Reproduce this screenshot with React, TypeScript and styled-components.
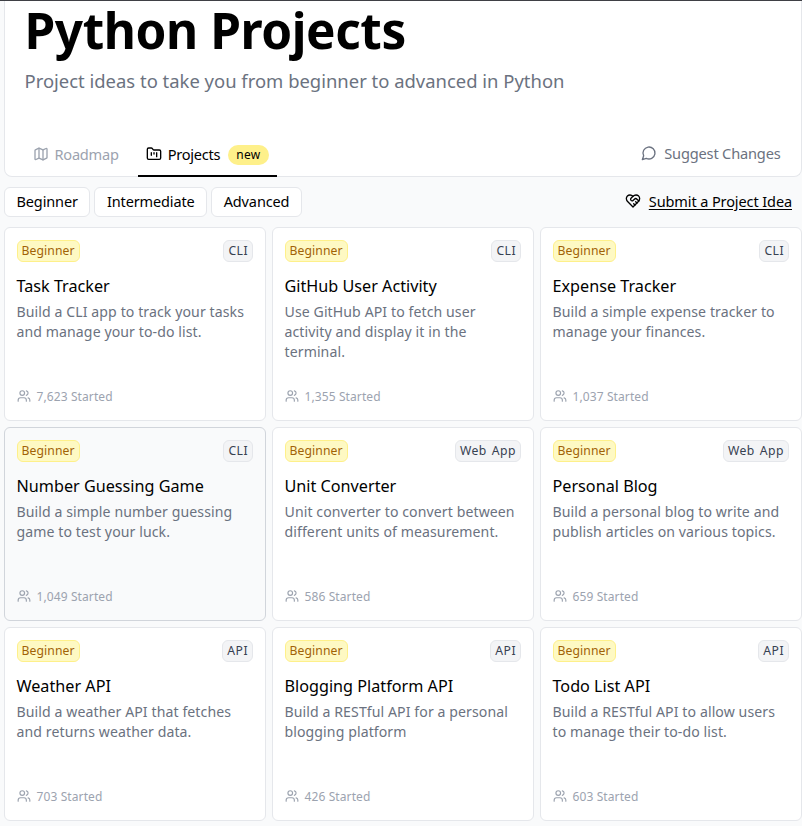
import React from 'react';
import styled, { createGlobalStyle, css } from 'styled-components';
import { FolderKanban, Map, Users } from 'lucide-react';

const GlobalStyle = createGlobalStyle`
  *, *::before, *::after { box-sizing: border-box; }
  body {
    margin: 0;
    background: #f9fafb;
    color: #000;
    font-family: "Noto Sans", "Open Sans", sans-serif;
    overflow: hidden;
  }
  h1, h3, p { margin: 0; }
  svg { flex: none; }
`;

const Page = styled.main`
  height: 826px;
  padding-left: 4px;
  border-top: 1px solid #3f4045;
`;

const Header = styled.header`
  display: flex;
  flex-direction: column;
  height: 176px;
  padding: 0 20.5px 0 19.5px;
  background: #fff;
  border: 1px solid #e5e7eb;
  border-top: 0;
  border-radius: 0 0 8px 8px;
`;

const Title = styled.h1`
  height: 58px;
  font-size: 49.5px;
  font-weight: 700;
  line-height: 58px;
  letter-spacing: -0.42px;
  white-space: nowrap;
`;

const Subtitle = styled.p`
  margin-top: 8px;
  color: #6b7280;
  font-size: 18.45px;
  line-height: 28px;
  white-space: nowrap;
`;

const Tabs = styled.nav`
  display: flex;
  align-items: stretch;
  height: 44px;
  margin-top: auto;
  margin-bottom: -1px;
`;

const Tab = styled.a<{ $active?: boolean }>`
  display: flex;
  align-items: center;
  gap: 6px;
  padding: 0 8px;
  margin-right: 11px;
  border-bottom: 2px solid ${p => (p.$active ? '#000' : 'transparent')};
  color: ${p => (p.$active ? '#000' : '#9ca3af')};
  font-size: 14.6px;
  letter-spacing: -0.25px;
  white-space: nowrap;
`;

const NewBadge = styled.span`
  margin: 2px 0 0 2px;
  padding: 0 8px;
  border-radius: 10px;
  background: #fef08a;
  font-size: 12px;
  letter-spacing: 0.3px;
  line-height: 20px;
`;

const SuggestLink = styled.a`
  display: flex;
  align-items: center;
  gap: 7px;
  margin-left: auto;
  padding-bottom: 4px;
  color: #6b7280;
  font-size: 14.6px;
  letter-spacing: -0.18px;
  white-space: nowrap;
`;

const Filters = styled.div`
  display: flex;
  align-items: center;
  gap: 4px;
  height: 30px;
  margin: 10px 0;
`;

const FilterButton = styled.button`
  height: 30px;
  padding: 0 11.5px 2px;
  background: #fff;
  border: 1px solid #e5e7eb;
  border-radius: 6px;
  color: #000;
  font: 14.5px "Noto Sans", "Open Sans", sans-serif;
  letter-spacing: -0.12px;
  white-space: nowrap;
`;

const SubmitLink = styled.a`
  display: flex;
  align-items: center;
  gap: 8px;
  margin-left: auto;
  margin-right: 10px;
  padding-bottom: 2px;
  font-size: 14.5px;
  letter-spacing: -0.1px;
  white-space: nowrap;
  span { text-decoration: underline; text-underline-offset: 2px; }
`;

const Grid = styled.section`
  display: grid;
  grid-template-columns: repeat(3, 262px);
  grid-auto-rows: 194px;
  gap: 6px;
`;

const Card = styled.article<{ $hovered?: boolean }>`
  display: flex;
  flex-direction: column;
  padding: 12px 12px 12px 11.5px;
  background: ${p => (p.$hovered ? '#f9fafb' : '#fff')};
  border: 1px solid ${p => (p.$hovered ? '#d1d5db' : '#e5e7eb')};
  border-radius: 6px;
`;

const Labels = styled.div`
  display: flex;
  justify-content: space-between;
`;

const Label = styled.span<{ $level?: boolean }>`
  height: 22px;
  padding: 0 4px;
  border: 1px solid #e5e7eb;
  border-radius: 6px;
  background: #f3f4f6;
  color: #374151;
  font-size: 12.2px;
  letter-spacing: ${p => (p.$level ? '0.1px' : '0.45px')};
  word-spacing: 1.5px;
  line-height: 20px;
  ${p => p.$level && css`
    border-color: #fef08a;
    background: #fef9c3;
    color: #a16207;
  `}
`;

const CardTitle = styled.h3`
  margin-top: 12px;
  font-size: 16.2px;
  font-weight: 400;
  line-height: 24px;
  white-space: nowrap;
`;

const Description = styled.p`
  margin-top: 4px;
  color: #6b7280;
  font-size: 14.1px;
  letter-spacing: 0.09px;
  line-height: 20px;
  white-space: pre;
`;

const Started = styled.div`
  display: flex;
  align-items: center;
  gap: 6px;
  height: 20px;
  margin-top: auto;
  margin-bottom: 2px;
  color: #9ca3af;
  font-size: 12px;
  letter-spacing: 0.1px;
`;

const StrokeIcon = styled.svg.attrs({
  viewBox: '0 0 24 24',
  width: 16,
  height: 16,
  fill: 'none',
  stroke: 'currentColor',
  strokeWidth: 2,
  strokeLinecap: 'round',
  strokeLinejoin: 'round',
})``;

const ChatIcon = () => (
  <StrokeIcon><path d="M7.9 20A9 9 0 1 0 4 16.1L2 22Z" /></StrokeIcon>
);

const HandshakeIcon = () => (
  <StrokeIcon>
    <path d="M19 14c1.49-1.46 3-3.21 3-5.5A5.5 5.5 0 0 0 16.5 3c-1.76 0-3 .5-4.5 2-1.5-1.5-2.74-2-4.5-2A5.5 5.5 0 0 0 2 8.5c0 2.3 1.5 4.05 3 5.5l7 7Z" />
    <path d="M12 5 9.04 7.96a2.17 2.17 0 0 0 0 3.08c.82.82 2.13.85 3 .07l2.07-1.9a2.82 2.82 0 0 1 3.79 0l2.96 2.66" />
    <path d="m18 15-2-2" />
    <path d="m15 18-2-2" />
  </StrokeIcon>
);

const projects = [
  { title: 'Task Tracker', type: 'CLI', text: 'Build a CLI app to track your tasks\nand manage your to-do list.', started: '7,623' },
  { title: 'GitHub User Activity', type: 'CLI', text: 'Use GitHub API to fetch user\nactivity and display it in the\nterminal.', started: '1,355' },
  { title: 'Expense Tracker', type: 'CLI', text: 'Build a simple expense tracker to\nmanage your finances.', started: '1,037' },
  { title: 'Number Guessing Game', type: 'CLI', text: 'Build a simple number guessing\ngame to test your luck.', started: '1,049', hovered: true },
  { title: 'Unit Converter', type: 'Web App', text: 'Unit converter to convert between\ndifferent units of measurement.', started: '586' },
  { title: 'Personal Blog', type: 'Web App', text: 'Build a personal blog to write and\npublish articles on various topics.', started: '659' },
  { title: 'Weather API', type: 'API', text: 'Build a weather API that fetches\nand returns weather data.', started: '703' },
  { title: 'Blogging Platform API', type: 'API', text: 'Build a RESTful API for a personal\nblogging platform', started: '426' },
  { title: 'Todo List API', type: 'API', text: 'Build a RESTful API to allow users\nto manage their to-do list.', started: '603' },
];

export default function App() {
  return (
    <>
      <GlobalStyle />
      <Page>
        <Header>
          <Title>Python Projects</Title>
          <Subtitle>Project ideas to take you from beginner to advanced in Python</Subtitle>
          <Tabs>
            <Tab><Map size={16} />Roadmap</Tab>
            <Tab $active><FolderKanban size={16} />Projects<NewBadge>new</NewBadge></Tab>
            <SuggestLink><ChatIcon />Suggest Changes</SuggestLink>
          </Tabs>
        </Header>
        <Filters>
          {['Beginner', 'Intermediate', 'Advanced'].map(f => <FilterButton key={f}>{f}</FilterButton>)}
          <SubmitLink><HandshakeIcon /><span>Submit a Project Idea</span></SubmitLink>
        </Filters>
        <Grid>
          {projects.map(p => (
            <Card key={p.title} $hovered={p.hovered}>
              <Labels><Label $level>Beginner</Label><Label>{p.type}</Label></Labels>
              <CardTitle>{p.title}</CardTitle>
              <Description>{p.text}</Description>
              <Started><Users size={14} />{p.started} Started</Started>
            </Card>
          ))}
        </Grid>
      </Page>
    </>
  );
}
